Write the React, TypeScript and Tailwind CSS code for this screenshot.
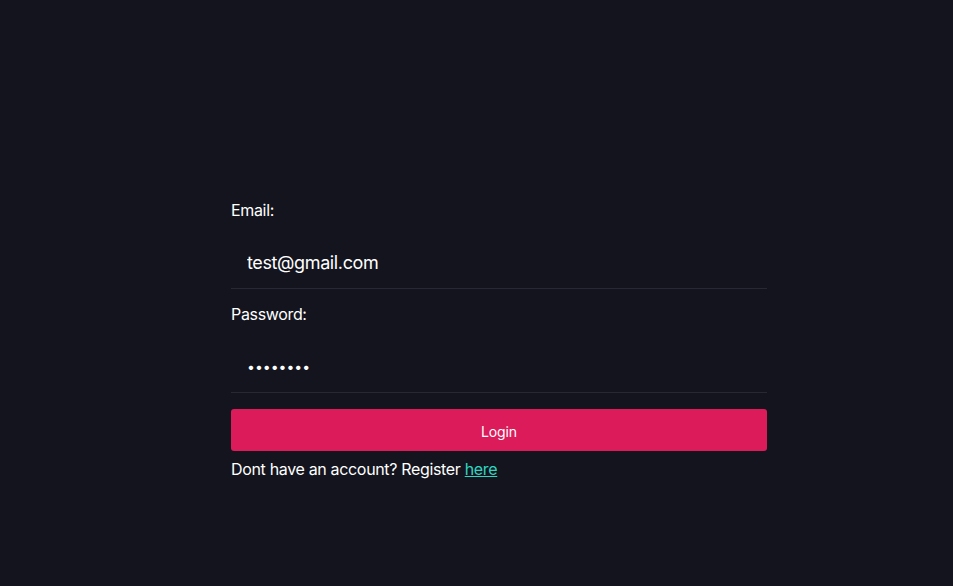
import React from "react";

const App = () => {
  return (
    <div
      className="min-h-screen w-full bg-[#13141d] text-white tracking-[-0.021em]"
      style={{ fontFamily: "Inter, 'Noto Sans', sans-serif" }}
    >
      <div className="pt-[198px] pl-[231px]">
        <form className="w-[536px] flex flex-col" onSubmit={(e) => e.preventDefault()}>
          {/* Email */}
          <label className="h-6 text-base leading-6 text-white">Email:</label>
          <input
            type="email"
            defaultValue="test@gmail.com"
            className="mt-[14px] h-[53px] w-full bg-transparent border-b border-[#272833] px-4 text-lg tracking-[-0.021em] text-white outline-none"
          />

          {/* Password */}
          <label className="mt-[13px] h-6 text-base leading-6 text-white">Password:</label>
          <input
            type="password"
            defaultValue="password"
            className="mt-[14px] h-[53px] w-full bg-transparent border-b border-[#272833] px-4 text-sm tracking-normal text-white outline-none"
          />

          <button
            type="submit"
            className="mt-4 h-[42px] w-full rounded-[3px] bg-[#db1b5a] pt-[3px] text-sm tracking-[-0.01em] text-white"
          >
            Login
          </button>

          <p className="mt-[6px] text-base leading-6 text-white">
            Dont have an account? Register{" "}
            <a href="#" className="text-[#2fd6c1] underline">
              here
            </a>
          </p>
        </form>
      </div>
    </div>
  );
};

export default App;
